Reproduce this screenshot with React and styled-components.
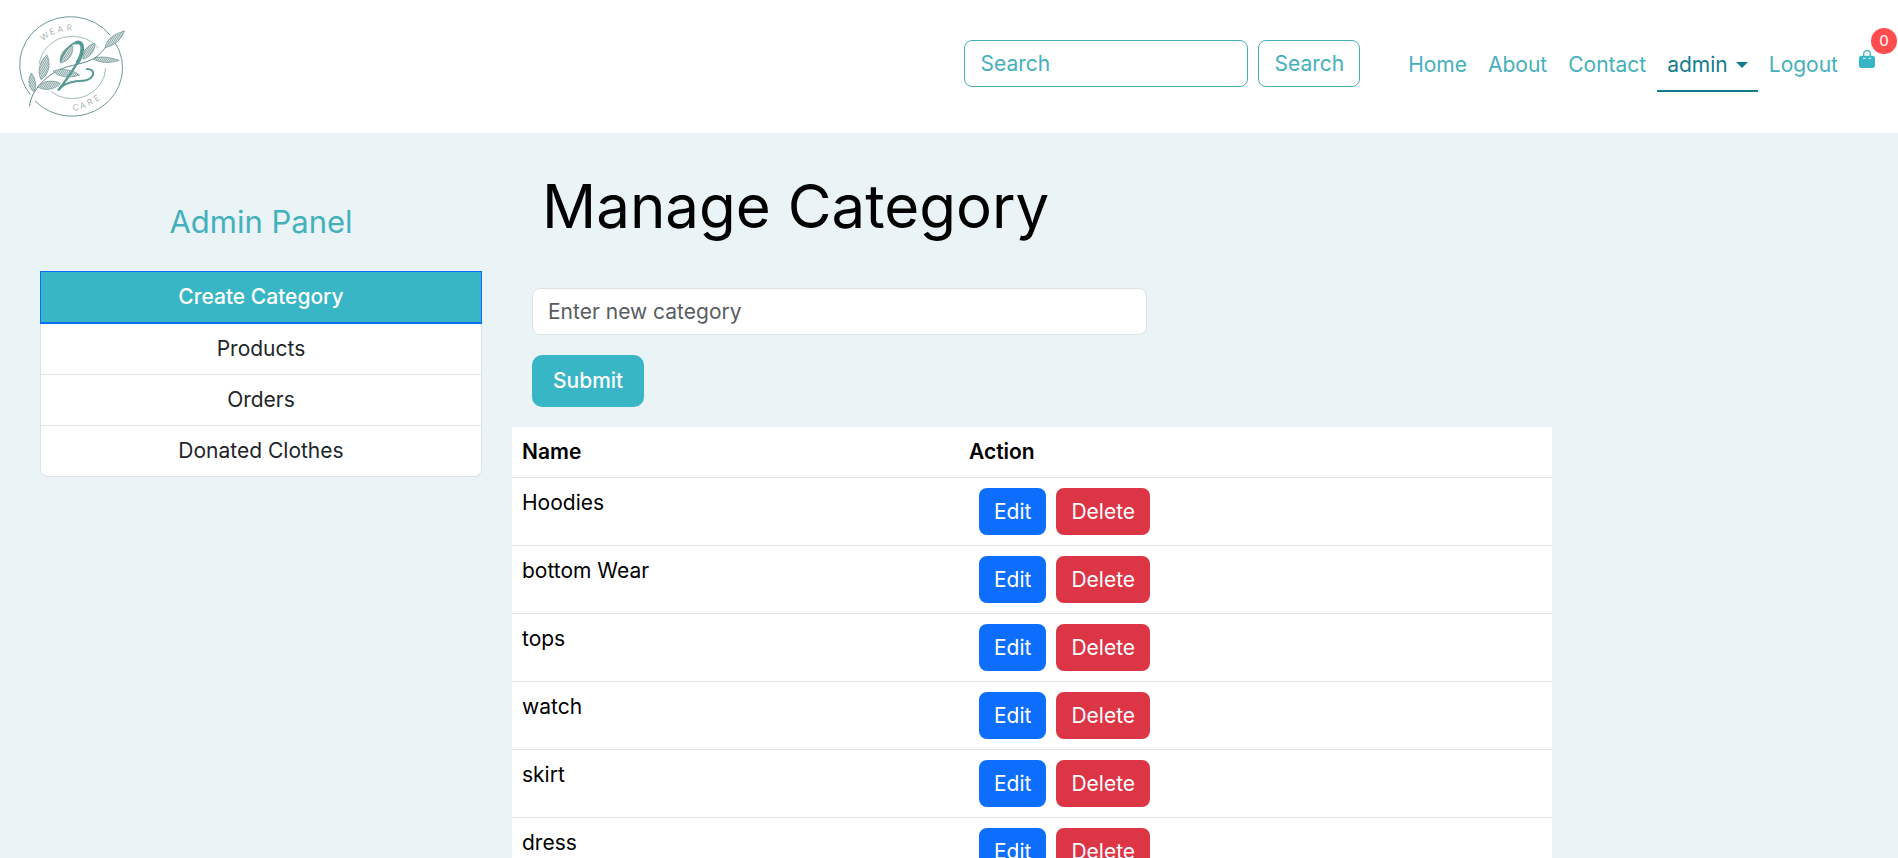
import React from "react";
import styled, { createGlobalStyle, css } from "styled-components";

const teal = "#38b6c5";
const linkTeal = "#44b0bc";
const line = "#dee2e6";

const GlobalStyle = createGlobalStyle`
  *, *::before, *::after { box-sizing: border-box; }
  body {
    margin: 0;
    background: #eaf4f7;
    color: #000;
    font-family: Inter, "Open Sans", sans-serif;
    font-size: 21px;
    font-weight: 400;
    line-height: 30px;
  }
  input, button { font: inherit; }
  a { text-decoration: none; }
`;

const Page = styled.div`
  overflow-x: clip;
`;

const Header = styled.header`
  display: flex;
  align-items: center;
  justify-content: space-between;
  padding-left: 16px;
  background: #fff;
`;

const Brand = styled.a`
  display: block;
  padding: 16px 0 14px;
`;

const HeaderTools = styled.div`
  display: flex;
  align-items: center;
  gap: 38px;
`;

const SearchForm = styled.form`
  display: flex;
  gap: 10px;
  padding-bottom: 6px;
`;

const fieldBox = css`
  height: 47px;
  padding: 7px 15px;
  border: 1px solid ${linkTeal};
  border-radius: 8px;
  background: #fff;
`;

const SearchInput = styled.input`
  ${fieldBox}
  width: 284px;
  color: ${linkTeal};
  &::placeholder { color: ${linkTeal}; opacity: 1; }
`;

const SearchButton = styled.button`
  ${fieldBox}
  color: ${linkTeal};
`;

const Nav = styled.nav`
  display: flex;
  align-items: center;
  gap: 1px;
  padding-bottom: 2px;
`;

const NavLink = styled.a`
  display: flex;
  align-items: center;
  gap: 8px;
  padding: 10px;
  border-bottom: 2px solid ${(p) => (p.$active ? "#127c8a" : "transparent")};
  color: ${(p) => (p.$active ? "#127c8a" : linkTeal)};
`;

const Caret = styled.span`
  border: 6px solid transparent;
  border-top-color: currentColor;
  border-bottom: 0;
`;

const CartLink = styled.a`
  position: relative;
  display: block;
  height: 18px;
  margin: 0 23px 14px 10px;
`;

const Badge = styled.span`
  position: absolute;
  left: 12px;
  bottom: 14px;
  width: 26px;
  height: 26px;
  border-radius: 50%;
  background: #ff4d4f;
  color: #fff;
  font-size: 15px;
  line-height: 26px;
  text-align: center;
`;

const Columns = styled.div`
  display: flex;
  align-items: flex-start;
  margin: 0 -15px 0 25px;
`;

const Sidebar = styled.aside`
  flex: 0 0 25%;
  padding: 70px 15px 0;
  text-align: center;
`;

const PanelTitle = styled.h2`
  margin: 0 0 30px;
  color: ${linkTeal};
  font-size: 31px;
  font-weight: 400;
  line-height: 38px;
`;

const MenuList = styled.ul`
  margin: 0;
  padding: 0;
  border: 1px solid ${line};
  border-top: 0;
  border-radius: 0 0 8px 8px;
  background: #fff;
  list-style: none;
`;

const MenuItem = styled.li`
  &:not(:last-child) { border-bottom: 1px solid ${line}; }
  &:first-child { margin: 0 -1px; border: 0; }
`;

const MenuLink = styled.a`
  display: block;
  padding: 10px 20px;
  color: #212529;
  ${(p) => p.$active && css`
    border: 1px solid #0d6efd;
    border-bottom-width: 2px;
    background: ${teal};
    color: #fff;
    font-weight: 500;
  `}
`;

const Main = styled.main`
  flex: 0 0 75%;
  padding: 40px 15px 0;
`;

const Title = styled.h1`
  margin: 0 0 48px;
  padding-left: 30px;
  font-size: 60px;
  font-weight: 400;
  line-height: 67px;
`;

const CategoryForm = styled.form`
  display: flex;
  flex-direction: column;
  align-items: flex-start;
  gap: 20px;
  padding: 0 0 20px 20px;
`;

const CategoryInput = styled.input`
  width: 45%;
  height: 47px;
  padding: 7px 15px;
  border: 1px solid ${line};
  border-radius: 8px;
  background: #fff;
  &::placeholder { color: #595c5f; opacity: 1; }
`;

const SubmitButton = styled.button`
  height: 52px;
  padding: 0 21px;
  border: 0;
  border-radius: 10px;
  background: ${teal};
  color: #fff;
  font-weight: 500;
`;

const Table = styled.table`
  width: 75%;
  border-collapse: collapse;
  table-layout: fixed;
  background: #fff;
`;

const HeadCell = styled.th`
  width: ${(p) => p.$width};
  height: 50px;
  padding: 10px;
  border-bottom: 1px solid ${line};
  font-weight: 600;
  text-align: left;
`;

const Cell = styled.td`
  height: 68px;
  padding: 10px;
  border-bottom: 1px solid ${line};
  vertical-align: top;
`;

const Actions = styled.div`
  display: flex;
  gap: 10px;
  padding-left: 10px;
`;

const ActionButton = styled.button`
  height: 47px;
  padding: 0 15px;
  border: 0;
  border-radius: 8px;
  background: ${(p) => (p.$danger ? "#dc3545" : "#0d6efd")};
  color: #fff;
`;

const leaves = [
  "M312 140 C316 112 344 98 370 90 C362 116 340 134 312 140Z",
  "M276 173 C300 163 332 170 354 178 C328 188 296 186 276 173Z",
  "M246 175 C246 146 262 130 282 127 C282 150 268 168 246 175Z",
  "M178 186 C174 154 196 138 215 135 C218 160 204 180 178 186Z",
  "M156 211 C182 200 214 206 236 222 C208 232 176 230 156 211Z",
  "M120 236 C106 206 120 176 138 162 C152 190 142 222 120 236Z",
  "M110 258 C126 238 156 236 178 247 C160 268 130 270 110 258Z",
  "M99 273 C78 256 82 230 91 216 C104 232 108 256 99 273Z",
];

function Logo() {
  return (
    <svg width="110" height="103" viewBox="45 45 330 309" display="block" role="img" aria-label="Wear 2 Care">
      <defs>
        <pattern id="veins" width="5" height="5" patternUnits="userSpaceOnUse" patternTransform="rotate(32)">
          <rect width="5" height="5" fill="#e3ebeb" />
          <path d="M0 0V5" stroke="#6f8f8f" strokeWidth="4" />
        </pattern>
      </defs>
      <g fill="none" stroke="#6f9a98" strokeWidth="3">
        <path d="M88 281 A152 145 0 0 1 328 103" />
        <path d="M343 126 A152 145 0 0 1 102 300" />
        <path d="M115 188 A100 95 0 0 1 292 141" strokeWidth="2" />
        <path d="M314 201 A100 95 0 0 1 150 271" strokeWidth="2" />
        <path d="M86 316 C88 270 140 214 200 197 C240 187 280 180 300 155 C312 140 340 112 370 90" stroke="#5b8a87" />
      </g>
      <g fill="url(#veins)" stroke="#6a8f8e" strokeWidth="2">
        {leaves.map((d) => <path key={d} d={d} />)}
      </g>
      <g fill="none" stroke="#559b94" strokeLinecap="round" strokeLinejoin="round">
        <path d="M179 180 C190 145 214 124 230 124" strokeWidth="5" />
        <path d="M226 125 C252 118 246 158 230 184" strokeWidth="11" />
        <path d="M230 184 C210 216 190 246 173 266" strokeWidth="7" />
        <path d="M173 266 C190 246 222 238 248 239 C282 234 286 204 258 204" strokeWidth="6" />
      </g>
      <g fill="#8f9999" fontSize="25" fontWeight="300">
        <text x="126 150 171 197" y="120 103 95 89" rotate="-36 -24 -12 -2">WEAR</text>
        <text x="216 239 263 286" y="329 324 315 303" rotate="-6 -16 -26 -34">CARE</text>
      </g>
    </svg>
  );
}

function BagIcon() {
  return (
    <svg width="16" height="18" viewBox="0 0 48 54" display="block" aria-hidden="true">
      <path d="M14 22V12a10 10 0 0 1 20 0v10" fill="none" stroke={teal} strokeWidth="4" />
      <rect y="17" width="48" height="37" rx="8" fill={teal} />
      <path d="M13 25h5M30 25h5" stroke="#fff" strokeWidth="3" strokeLinecap="round" />
    </svg>
  );
}

const links = ["Home", "About", "Contact"];
const panel = ["Create Category", "Products", "Orders", "Donated Clothes"];
const categories = ["Hoodies", "bottom Wear", "tops", "watch", "skirt", "dress"];

export default function App() {
  return (
    <Page>
      <GlobalStyle />
      <Header>
        <Brand href="#"><Logo /></Brand>
        <HeaderTools>
          <SearchForm role="search">
            <SearchInput type="search" placeholder="Search" aria-label="Search" />
            <SearchButton type="submit">Search</SearchButton>
          </SearchForm>
          <Nav>
            {links.map((name) => <NavLink key={name} href="#">{name}</NavLink>)}
            <NavLink href="#" $active>admin<Caret /></NavLink>
            <NavLink href="#">Logout</NavLink>
            <CartLink href="#" aria-label="Cart">
              <BagIcon />
              <Badge>0</Badge>
            </CartLink>
          </Nav>
        </HeaderTools>
      </Header>
      <Columns>
        <Sidebar>
          <PanelTitle>Admin Panel</PanelTitle>
          <MenuList>
            {panel.map((name, i) => (
              <MenuItem key={name}><MenuLink href="#" $active={i === 0}>{name}</MenuLink></MenuItem>
            ))}
          </MenuList>
        </Sidebar>
        <Main>
          <Title>Manage Category</Title>
          <CategoryForm>
            <CategoryInput type="text" placeholder="Enter new category" aria-label="Enter new category" />
            <SubmitButton type="submit">Submit</SubmitButton>
          </CategoryForm>
          <Table>
            <thead>
              <tr>
                <HeadCell scope="col" $width="43%">Name</HeadCell>
                <HeadCell scope="col" $width="57%">Action</HeadCell>
              </tr>
            </thead>
            <tbody>
              {categories.map((name) => (
                <tr key={name}>
                  <Cell>{name}</Cell>
                  <Cell>
                    <Actions>
                      <ActionButton type="button">Edit</ActionButton>
                      <ActionButton type="button" $danger>Delete</ActionButton>
                    </Actions>
                  </Cell>
                </tr>
              ))}
            </tbody>
          </Table>
        </Main>
      </Columns>
    </Page>
  );
}
